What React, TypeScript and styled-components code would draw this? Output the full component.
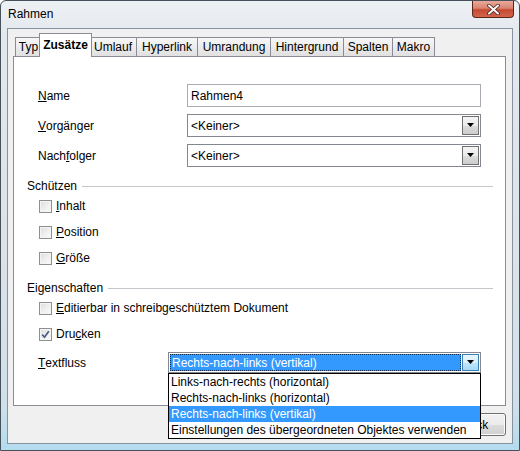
import React from 'react'
import styled, { createGlobalStyle, css } from 'styled-components'

const GlobalStyle = createGlobalStyle`
  html, body {
    margin: 0;
    padding: 0;
  }
  body {
    width: 520px;
    height: 451px;
    overflow: hidden;
    background: #fff;
    font-family: "Liberation Sans", Arial, sans-serif;
    font-size: 12px;
    color: #000;
  }
  * {
    box-sizing: border-box;
  }
`

const Window = styled.div`
  width: 520px;
  height: 451px;
  display: flex;
  flex-direction: column;
  padding: 0 6px 6px;
  border: 1px solid #46515c;
  border-radius: 6px 6px 0 0;
  background: linear-gradient(to bottom, #eef1f4 0%, #e3e8ed 8%, #dbe2e8 60%, #cfe0ea 90%, #b3dcee 100%);
`

const TitleBar = styled.div`
  height: 27px;
  display: flex;
  align-items: flex-start;
`

const Title = styled.div`
  margin: 5px 0 0 1px;
  line-height: 16px;
  font-size: 12px;
`

const CloseButton = styled.div`
  margin-left: auto;
  margin-right: -1px;
  width: 42px;
  height: 17px;
  border: 1px solid #5e241b;
  border-top: none;
  border-radius: 0 0 4px 4px;
  background: linear-gradient(to bottom, #e9a99b 0%, #d98470 45%, #c54a34 55%, #d2654b 100%);
  display: flex;
  align-items: center;
  justify-content: center;
`

const Client = styled.div`
  flex: 1;
  display: flex;
  flex-direction: column;
  padding: 4px 6px 0 5px;
  border: 1px solid #86929e;
  background: #f0f0f0;
`

const TabStrip = styled.div`
  height: 23px;
  display: flex;
  align-items: flex-end;
  padding-left: 2px;
`

const Tab = styled.div<{ $w: number; $active?: boolean }>`
  position: relative;
  width: ${p => p.$w}px;
  height: 19px;
  margin-left: -1px;
  border: 1px solid #898c95;
  border-bottom: none;
  background: linear-gradient(to bottom, #f7f7f7 0%, #ececec 50%, #e0e0e0 100%);
  display: flex;
  align-items: center;
  justify-content: center;
  white-space: nowrap;
  &:first-child {
    margin-left: 0;
  }
  ${p =>
    p.$active &&
    css`
      z-index: 2;
      width: ${p.$w + 4}px;
      height: 24px;
      margin-left: -3px;
      margin-right: -2px;
      margin-bottom: -1px;
      padding-bottom: 1px;
      background: #fff;
      font-weight: bold;
    `}
`

const Panel = styled.div`
  position: relative;
  z-index: 1;
  height: 350px;
  display: flex;
  flex-direction: column;
  border: 1px solid #898c95;
  background: #fff;
`

const FieldGrid = styled.div`
  display: grid;
  grid-template-columns: 149px 294px;
  grid-auto-rows: 23px;
  row-gap: 7px;
  margin: 27px 0 0 24px;
`

const FieldLabel = styled.div`
  display: flex;
  align-items: center;
  white-space: nowrap;
`

const Key = styled.span`
  text-decoration: underline;
`

const TextBox = styled.div`
  display: flex;
  align-items: center;
  padding-left: 3px;
  border: 1px solid #a9acb2;
  background: #fff;
`

const Combo = styled.div<{ $h: number }>`
  display: flex;
  height: ${p => p.$h}px;
  padding: 1px;
  border: 1px solid #828790;
  background: #fff;
`

const ComboValue = styled.div<{ $selected?: boolean }>`
  flex: 1;
  display: flex;
  align-items: center;
  padding-left: 2px;
  white-space: nowrap;
  ${p =>
    p.$selected &&
    css`
      margin-right: 1px;
      background: #3399ff;
      color: #fff;
      outline: 1px dotted #0d2a52;
      outline-offset: -1px;
    `}
`

const DropButton = styled.div<{ $hot?: boolean }>`
  width: 17px;
  display: flex;
  align-items: center;
  justify-content: center;
  padding-bottom: 1px;
  border: 1px solid #707070;
  background: linear-gradient(to bottom, #f4f4f4 0%, #ebebeb 50%, #dcdcdc 51%, #cdcdcd 100%);
  ${p =>
    p.$hot &&
    css`
      border-color: #3c7fb1;
      background: linear-gradient(to bottom, #eaf6fd 0%, #d9f0fc 50%, #bee6fd 51%, #a7d9f5 100%);
    `}
`

const Section = styled.div<{ $top: number }>`
  display: flex;
  align-items: center;
  gap: 5px;
  height: 14px;
  margin: ${p => p.$top}px 12px 0 13px;
  &::after {
    content: '';
    flex: 1;
    height: 1px;
    background: #c3c7cb;
  }
`

const CheckRow = styled.label`
  display: flex;
  align-items: center;
  gap: 4px;
  height: 26px;
  padding-left: 25px;
`

const Box = styled.span`
  width: 13px;
  height: 13px;
  display: flex;
  align-items: center;
  justify-content: center;
  border: 1px solid #8e8f8f;
  background: linear-gradient(135deg, #dcdcdc 0%, #eeeeee 50%, #fbfbfb 100%);
  box-shadow: inset 0 0 0 1px #f4f4f4;
`

const FlowRow = styled.div`
  display: grid;
  grid-template-columns: 130px 313px;
  margin: 5px 0 0 24px;
`

const ComboWrap = styled.div`
  position: relative;
`

const DropList = styled.ul`
  position: absolute;
  top: 100%;
  left: 0;
  right: 0;
  z-index: 5;
  margin: 0;
  padding: 0;
  list-style: none;
  border: 1px solid #000;
  background: #fff;
`

const DropItem = styled.li<{ $selected?: boolean }>`
  height: 16px;
  line-height: 16px;
  padding-left: 2px;
  white-space: nowrap;
  ${p =>
    p.$selected &&
    css`
      background: #3399ff;
      color: #fff;
    `}
`

const ButtonRow = styled.div`
  display: flex;
  justify-content: flex-end;
  gap: 6px;
  margin-top: 7px;
`

const Button = styled.div`
  width: 72px;
  height: 23px;
  display: flex;
  align-items: center;
  justify-content: center;
  border: 1px solid #707070;
  border-radius: 3px;
  background: linear-gradient(to bottom, #f2f2f2 0%, #ebebeb 50%, #dddddd 51%, #cfcfcf 100%);
  box-shadow: inset 0 0 0 1px #fbfbfb;
`

const Arrow = () => (
  <svg width="7" height="4" viewBox="0 0 7 4">
    <path d="M0 0H7L3.5 4Z" fill="#000" />
  </svg>
)

const Check = ({ checked }: { checked?: boolean }) => (
  <Box>
    {checked && (
      <svg width="9" height="9" viewBox="0 0 9 9">
        <path d="M1.2 4.6L3.5 7.2L7.8 1.2" fill="none" stroke="#4a5a7c" strokeWidth="1.7" />
      </svg>
    )}
  </Box>
)

const tabs = [
  { label: 'Typ', w: 27 },
  { label: 'Zusätze', w: 49, active: true },
  { label: 'Umlauf', w: 48 },
  { label: 'Hyperlink', w: 62 },
  { label: 'Umrandung', w: 74 },
  { label: 'Hintergrund', w: 74 },
  { label: 'Spalten', w: 50 },
  { label: 'Makro', w: 43 },
]

const flowOptions = [
  'Links-nach-rechts (horizontal)',
  'Rechts-nach-links (horizontal)',
  'Rechts-nach-links (vertikal)',
  'Einstellungen des übergeordneten Objektes verwenden',
]

export default function App() {
  return (
    <>
      <GlobalStyle />
      <Window>
        <TitleBar>
          <Title>Rahmen</Title>
          <CloseButton>
            <svg width="13" height="11" viewBox="0 0 13 11">
              <path d="M2 1.5L11 9.5M11 1.5L2 9.5" stroke="#4a1d16" strokeWidth="3.6" strokeLinecap="round" />
              <path d="M2 1.5L11 9.5M11 1.5L2 9.5" stroke="#fff" strokeWidth="2" strokeLinecap="round" />
            </svg>
          </CloseButton>
        </TitleBar>
        <Client>
          <TabStrip>
            {tabs.map(t => (
              <Tab key={t.label} $w={t.w} $active={t.active}>
                {t.label}
              </Tab>
            ))}
          </TabStrip>
          <Panel>
            <FieldGrid>
              <FieldLabel>
                <Key>N</Key>ame
              </FieldLabel>
              <TextBox>Rahmen4</TextBox>
              <FieldLabel>
                <Key>V</Key>orgänger
              </FieldLabel>
              <Combo $h={23}>
                <ComboValue>&lt;Keiner&gt;</ComboValue>
                <DropButton>
                  <Arrow />
                </DropButton>
              </Combo>
              <FieldLabel>
                Nach<Key>f</Key>olger
              </FieldLabel>
              <Combo $h={23}>
                <ComboValue>&lt;Keiner&gt;</ComboValue>
                <DropButton>
                  <Arrow />
                </DropButton>
              </Combo>
            </FieldGrid>

            <Section $top={12}>Schützen</Section>
            <CheckRow>
              <Check />
              <span>
                <Key>I</Key>nhalt
              </span>
            </CheckRow>
            <CheckRow>
              <Check />
              <span>
                <Key>P</Key>osition
              </span>
            </CheckRow>
            <CheckRow>
              <Check />
              <span>
                <Key>G</Key>röße
              </span>
            </CheckRow>

            <Section $top={10}>Eigenschaften</Section>
            <CheckRow>
              <Check />
              <span>
                <Key>E</Key>ditierbar in schreibgeschütztem Dokument
              </span>
            </CheckRow>
            <CheckRow>
              <Check checked />
              <span>
                Dru<Key>c</Key>ken
              </span>
            </CheckRow>

            <FlowRow>
              <FieldLabel>
                <Key>T</Key>extfluss
              </FieldLabel>
              <ComboWrap>
                <Combo $h={21}>
                  <ComboValue $selected>Rechts-nach-links (vertikal)</ComboValue>
                  <DropButton $hot>
                    <Arrow />
                  </DropButton>
                </Combo>
                <DropList>
                  {flowOptions.map((o, i) => (
                    <DropItem key={o} $selected={i === 2}>
                      {o}
                    </DropItem>
                  ))}
                </DropList>
              </ComboWrap>
            </FlowRow>
          </Panel>
          <ButtonRow>
            <Button>Zurück</Button>
          </ButtonRow>
        </Client>
      </Window>
    </>
  )
}
